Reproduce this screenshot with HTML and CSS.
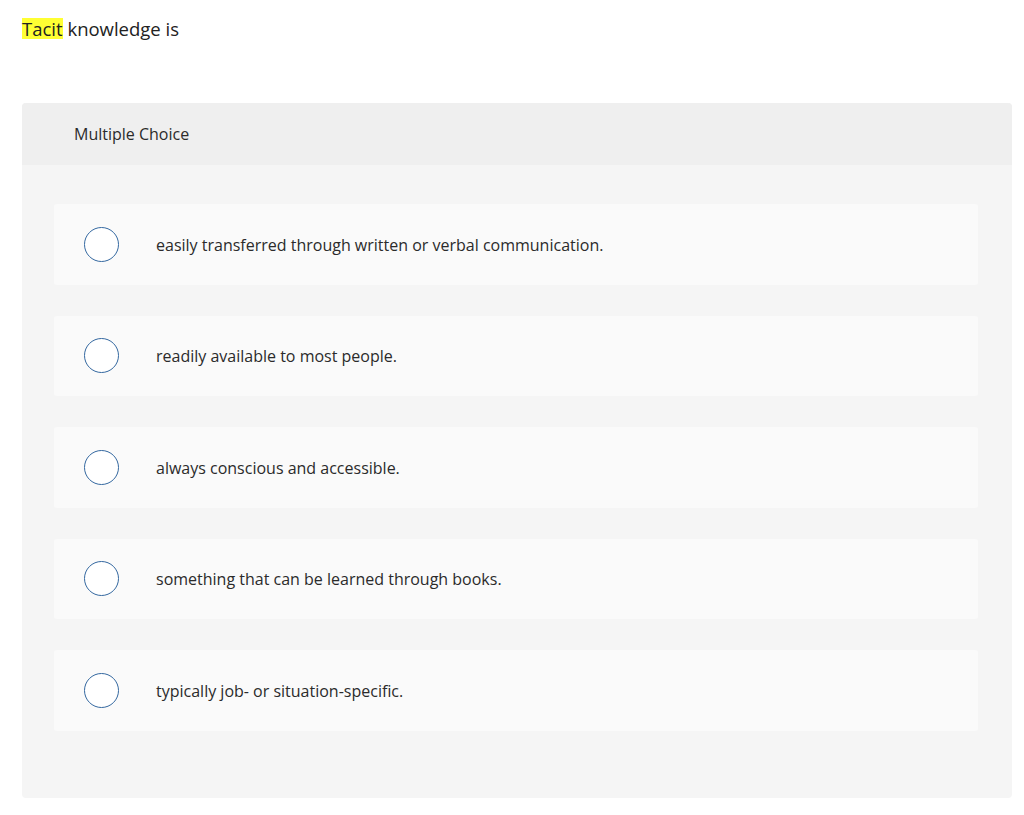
FILE: index.html
```html
<!DOCTYPE html>
<html>
<head>
<meta charset="utf-8">
<link rel="stylesheet" href="styles.css">
</head>
<body>
<div class="prompt"><span class="hl">Tacit</span> knowledge is</div>
<div class="question">
  <div class="qhead">Multiple Choice</div>
  <div class="qbody">
    <div class="choice"><span class="radio"></span><span class="label">easily transferred through written or verbal communication.</span></div>
    <div class="choice"><span class="radio"></span><span class="label">readily available to most people.</span></div>
    <div class="choice"><span class="radio"></span><span class="label">always conscious and accessible.</span></div>
    <div class="choice"><span class="radio"></span><span class="label">something that can be learned through books.</span></div>
    <div class="choice"><span class="radio"></span><span class="label">typically job- or situation-specific.</span></div>
  </div>
</div>
</body>
</html>
```
FILE: styles.css
```css
html, body { margin: 0; padding: 0; background: #ffffff; }
body { font-family: "Open Sans", "Lato", sans-serif; color: #2b2b2b; }
.prompt { padding: 17px 0 0 22px; font-size: 18.5px; line-height: 24px; height: 103px; box-sizing: border-box; color: #222; }
.hl { display: inline-block; line-height: 21px; background: #ffff33; }
.question { margin-left: 22px; width: 990px; border-radius: 4px; overflow: hidden; background: #f5f5f5; }
.qhead { height: 62px; background: #efefef; display: flex; align-items: center; padding-left: 52px; font-size: 16px; color: #2b2b2b; }
.qbody { padding: 39px 34px 67px 32px; display: flex; flex-direction: column; gap: 31px; }
.choice { height: 80.5px; background: #fafafa; border-radius: 3px; display: flex; align-items: center; }
.radio { width: 33px; height: 33px; border: 1px solid #3468a0; border-radius: 50%; background: #fff; margin-left: 30px; flex: none; }
.label { margin-left: 37px; padding-top: 1px; font-size: 16px; color: #2b2b2b; }
```
